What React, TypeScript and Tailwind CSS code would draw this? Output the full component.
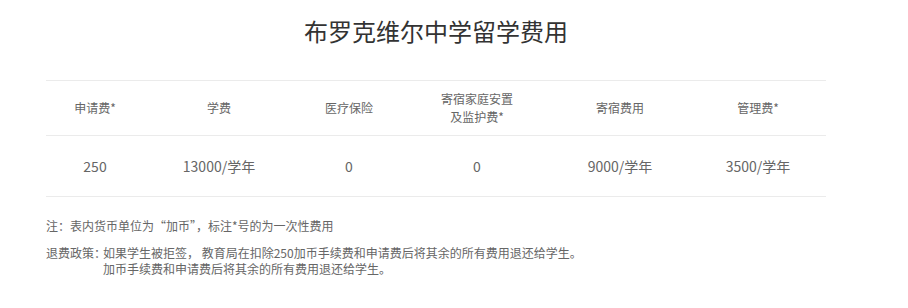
const headers = ["申请费*", "学费", "医疗保险", "寄宿家庭安置\n及监护费*", "寄宿费用", "管理费*"];
const values = ["250", "13000/学年", "0", "0", "9000/学年", "3500/学年"];
const widths = ["w-[98px]", "w-[150px]", "w-[110px]", "w-[146px]", "w-[140px]", "w-[136px]"];

export default function App() {
  return (
    <div
      className="min-h-[308px] w-[908px] bg-white text-[#666]"
      style={{ fontFamily: '"Noto Sans CJK SC", "Noto Sans", sans-serif' }}
    >
      <div className="ml-[46px] w-[780px]">
        <h1 className="pt-[13px] text-center text-[24px] leading-9 font-normal text-[#333]">
          布罗克维尔中学留学费用
        </h1>

        <table className="mt-[31px] w-full table-fixed border-collapse">
          <colgroup>
            {widths.map((w, i) => (
              <col key={i} className={w} />
            ))}
          </colgroup>
          <thead>
            <tr className="h-[55px] border-y border-[#ebebeb]">
              {headers.map((h) => (
                <th key={h} className="whitespace-pre-line text-center text-[12px] leading-[18px] font-normal">
                  {h}
                </th>
              ))}
            </tr>
          </thead>
          <tbody>
            <tr className="h-[61px] border-b border-[#ebebeb]">
              {values.map((v, i) => (
                <td key={i} className="text-center text-[14px]">
                  {v}
                </td>
              ))}
            </tr>
          </tbody>
        </table>

        <div className="mt-[21px] text-[12px] leading-4">
          <p>注：表内货币单位为“加币”，标注*号的为一次性费用</p>
          <div className="mt-[11px] flex">
            <span className="w-[57px] shrink-0 whitespace-nowrap">退费政策：</span>
            <div>
              <p>如果学生被拒签， 教育局在扣除250加币手续费和申请费后将其余的所有费用退还给学生。</p>
              <p>加币手续费和申请费后将其余的所有费用退还给学生。</p>
            </div>
          </div>
        </div>
      </div>
    </div>
  );
}
